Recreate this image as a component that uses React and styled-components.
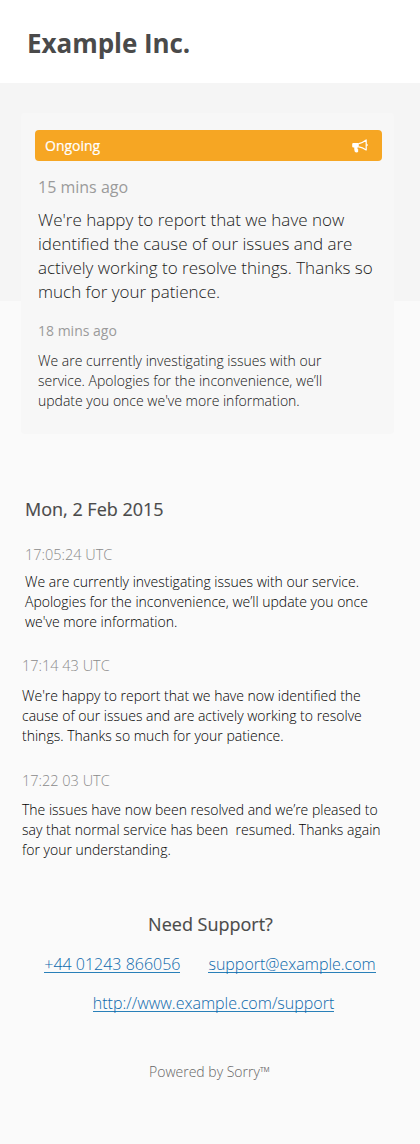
import React from "react";
import styled, { createGlobalStyle } from "styled-components";

const GlobalStyle = createGlobalStyle`
  *, *::before, *::after { box-sizing: border-box; }
  body {
    margin: 0;
    background: #fafafa;
    color: #333;
    font-family: "Open Sans", "Noto Sans", sans-serif;
    font-weight: 300;
  }
  h1, h2, p { margin: 0; }
`;

const Page = styled.div`
  width: 420px;
  min-height: 1144px;
  display: flex;
  flex-direction: column;
`;

const Header = styled.header`
  height: 83px;
  padding: 3px 27px 0;
  display: flex;
  align-items: center;
  background: #fff;
`;

const Brand = styled.h1`
  font-size: 26px;
  font-weight: 700;
  line-height: 36px;
  letter-spacing: -0.05px;
  color: #4a4a4a;
`;

const Hero = styled.section`
  height: 218px;
  padding: 30px 26px 0 21px;
  background: #f5f5f5;
`;

const Card = styled.article`
  height: 321px;
  padding: 17px 12px 0 14px;
  border-radius: 4px;
  background: #f7f7f7;
`;

const StatusBar = styled.div`
  height: 31px;
  padding: 0 14px 0 10px;
  display: flex;
  align-items: center;
  justify-content: space-between;
  border-radius: 4px;
  background: #f6a623;
  color: #fff;
  font-size: 14px;
  font-weight: 400;
  -webkit-text-stroke: 0.2px currentColor;
`;

const CardUpdate = styled.div`
  padding-left: 3px;
  margin-top: ${(p) => p.$gap}px;
`;

const Age = styled.p`
  font-size: ${(p) => (p.$large ? 16 : 14)}px;
  line-height: ${(p) => (p.$large ? 24 : 20)}px;
  font-weight: 400;
  color: #9b9b9b;
`;

const Message = styled.p`
  margin-top: ${(p) => p.$gap}px;
  font-size: ${(p) => (p.$large ? 17 : 14)}px;
  line-height: ${(p) => (p.$large ? 24 : 20)}px;
  color: ${(p) => p.$color || "#000"};
`;

const Line = styled.span`
  display: block;
  width: max-content;
  white-space: pre;
`;

const History = styled.section`
  padding: 196px 20px 0 22px;
`;

const DayHeading = styled.h2`
  padding-left: 3px;
  font-size: 18px;
  font-weight: 400;
  line-height: 24px;
  color: #4a4a4a;
  -webkit-text-stroke: 0.15px currentColor;
`;

const Entry = styled.article`
  margin-top: ${(p) => p.$gap}px;
  padding-left: ${(p) => p.$indent || 0}px;
`;

const Timestamp = styled.p`
  font-size: 14.5px;
  line-height: 20px;
  color: #8a8a8a;
`;

const Footer = styled.footer`
  margin-top: 52px;
  display: flex;
  flex-direction: column;
  align-items: center;
`;

const SupportHeading = styled(DayHeading)`
  padding: 0 0 0 1px;
`;

const Links = styled.div`
  margin-top: ${(p) => p.$gap}px;
  padding-left: ${(p) => p.$shift || 0}px;
  height: 24px;
  display: flex;
  gap: 28px;
`;

const Link = styled.a`
  height: 21px;
  border-bottom: 1px solid #2980b9;
  font-size: 16px;
  line-height: 24px;
  color: #0d69ac;
  text-decoration: none;
`;

const Powered = styled.p`
  margin-top: 47px;
  padding-right: 1px;
  font-size: 14px;
  line-height: 20px;
  color: #666;
`;

const Megaphone = () => (
  <svg width="16" height="14" viewBox="0 0 16 14" fill="none" aria-hidden="true">
    <path
      d="M1.300 4H6.800v4.500H5.400l.2 1.500.8.800-.4 1.200.3.800c-.8.900-2.900.8-3.500-.1C2.300 11.300 2.200 10 2.200 8.500H1.300C.6 8.500.2 8.200.2 7.600V4.900C.2 4.300.6 4 1.300 4Z"
      fill="#fff"
    />
    <path d="M6.800 4.600C9.500 4.200 11.700 2.800 14.200.9V11C11.700 9.300 9.500 8.300 6.800 7.900" stroke="#fff" strokeWidth="1.200" strokeLinejoin="round" />
    <path d="M14.700 4.900c1.100.3 1.100 1.900 0 2.200Z" fill="#fff" stroke="#fff" strokeWidth=".5" />
  </svg>
);

const Lines = ({ items }) => items.map((t) => <Line key={t}>{t}</Line>);

export default function App() {
  return (
    <Page>
      <GlobalStyle />
      <Header>
        <Brand>Example Inc.</Brand>
      </Header>
      <Hero>
        <Card>
          <StatusBar>
            Ongoing
            <Megaphone />
          </StatusBar>
          <CardUpdate $gap={14}>
            <Age $large>15 mins ago</Age>
            <Message $large $gap={9} $color="#222">
              <Lines
                items={[
                  "We're happy to report that we have now",
                  "identified the cause of our issues and are",
                  "actively working to resolve things. Thanks so",
                  "much for your patience.",
                ]}
              />
            </Message>
          </CardUpdate>
          <CardUpdate $gap={17}>
            <Age>18 mins ago</Age>
            <Message $gap={10} $color="#161616">
              <Lines
                items={[
                  "We are currently investigating issues with our",
                  "service. Apologies for the inconvenience, we’ll",
                  "update you once we've more information.",
                ]}
              />
            </Message>
          </CardUpdate>
        </Card>
      </Hero>
      <History>
        <DayHeading>Mon, 2 Feb 2015</DayHeading>
        <Entry $gap={24} $indent={3}>
          <Timestamp>17:05:24 UTC</Timestamp>
          <Message $gap={7}>
            <Lines
              items={[
                "We are currently investigating issues with our service.",
                "Apologies for the inconvenience, we’ll update you once",
                "we've more information.",
              ]}
            />
          </Message>
        </Entry>
        <Entry $gap={24}>
          <Timestamp>17:14 43 UTC</Timestamp>
          <Message $gap={10}>
            <Lines
              items={[
                "We're happy to report that we have now identified the",
                "cause of our issues and are actively working to resolve",
                "things. Thanks so much for your patience.",
              ]}
            />
          </Message>
        </Entry>
        <Entry $gap={25}>
          <Timestamp>17:22 03 UTC</Timestamp>
          <Message $gap={9}>
            <Lines
              items={[
                "The issues have now been resolved and we’re pleased to",
                "say that normal service has been  resumed. Thanks again",
                "for your understanding.",
              ]}
            />
          </Message>
        </Entry>
      </History>
      <Footer>
        <SupportHeading>Need Support?</SupportHeading>
        <Links $gap={16}>
          <Link href="tel:+441243866056">+44 01243 866056</Link>
          <Link href="mailto:support@example.com">support@example.com</Link>
        </Links>
        <Links $gap={15} $shift={7}>
          <Link href="http://www.example.com/support">http://www.example.com/support</Link>
        </Links>
        <Powered>Powered by Sorry™</Powered>
      </Footer>
    </Page>
  );
}
